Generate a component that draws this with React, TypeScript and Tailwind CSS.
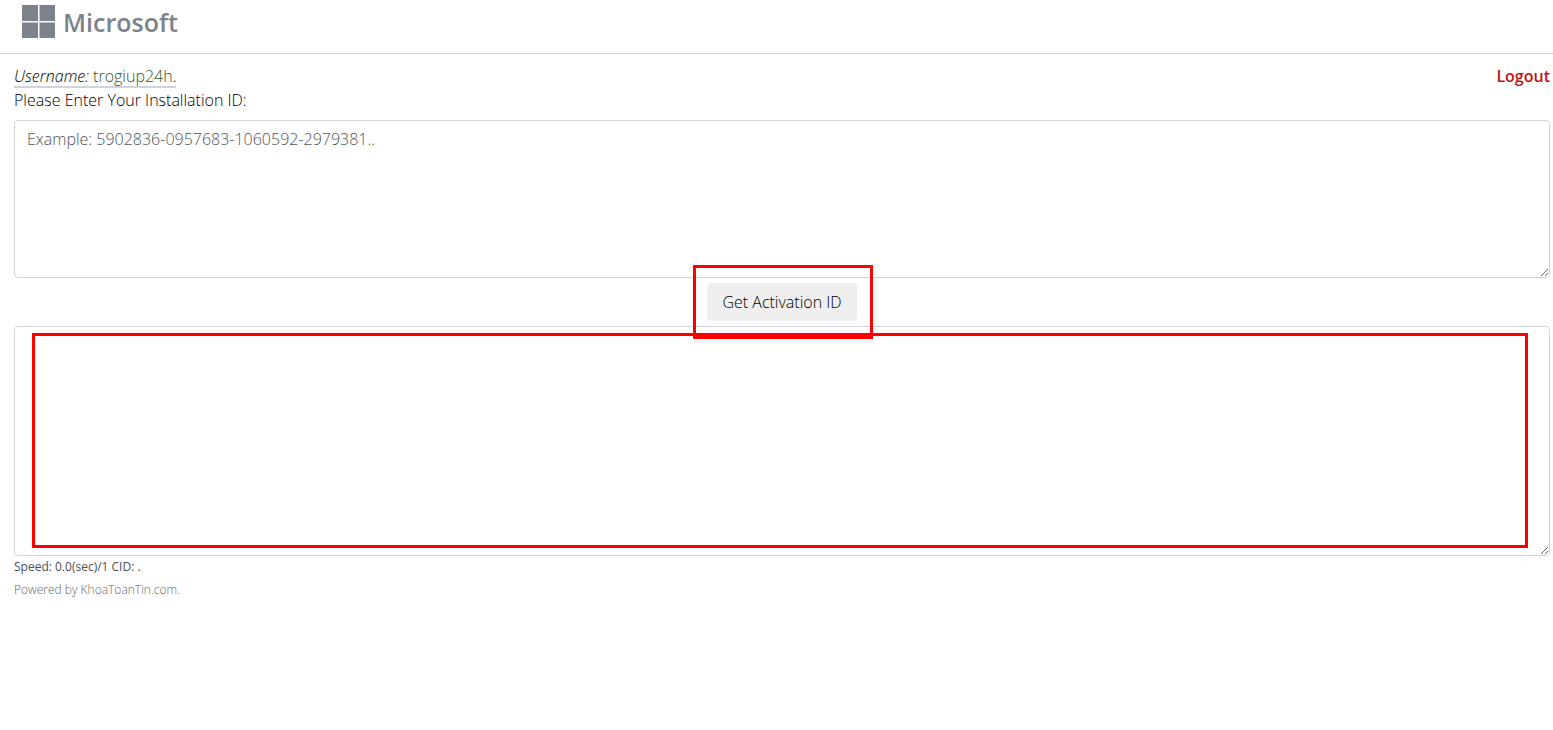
import { useState } from 'react';

const Logo = () => (
  <div className="flex items-center gap-2 text-[#7c838c]">
    <svg width="33" height="33" viewBox="0 0 33 33" fill="currentColor" aria-hidden="true">
      <rect x="0" y="0" width="16" height="16" />
      <rect x="17.5" y="0" width="15.5" height="16" />
      <rect x="0" y="17.5" width="16" height="15.5" />
      <rect x="17.5" y="17.5" width="15.5" height="15.5" />
    </svg>
    <span className="text-[25px] leading-8 font-semibold">Microsoft</span>
  </div>
);

const App = () => {
  const [installationId, setInstallationId] = useState('');
  const [result, setResult] = useState('');

  return (
    <div className="bg-white font-['Open_Sans',sans-serif] text-base leading-6 font-light text-[#212529]">
      {/* Top Bar */}
      <header className="h-[54px] border-b border-[#ced4da] pl-[22px] pt-[5px]">
        <Logo />
      </header>

      <main className="pt-[10px] pr-[3px] pl-[14px]">
        <div className="flex items-start justify-between">
          <div className="h-6 border-b-2 border-[#ced4da] text-black">
            <i>Username:</i> <span className="text-[#1f5a24]">trogiup24h</span>.
          </div>
          <a href="#logout" className="font-semibold text-[#c01414]">
            Logout
          </a>
        </div>

        <form onSubmit={(e) => e.preventDefault()}>
          <label htmlFor="iid" className="mb-2 block text-black">
            Please Enter Your Installation ID:
          </label>
          <textarea
            id="iid"
            rows={6}
            value={installationId}
            onChange={(e) => setInstallationId(e.target.value)}
            placeholder="Example: 5902836-0957683-1060592-2979381.."
            className="block w-full resize rounded border border-[#ced4da] px-3 py-[6px] placeholder:text-[#4c545c]"
          />

          <div className="flex justify-center py-[5px]">
            <div className="relative">
              <button type="submit" className="h-[38px] w-[150px] rounded bg-[#efefef] text-black">
                Get Activation ID
              </button>
              {/* Highlight frame */}
              <div className="pointer-events-none absolute -top-[18px] -right-4 -bottom-[18px] -left-[14px] z-10 border-3 border-[#ff0000]" />
            </div>
          </div>

          <div className="relative">
            <textarea
              aria-label="Activation ID"
              rows={9}
              value={result}
              onChange={(e) => setResult(e.target.value)}
              className="block w-full resize rounded border border-[#ced4da] px-3 py-[6px]"
            />
            {/* Highlight frame */}
            <div className="pointer-events-none absolute top-[7px] right-[22px] bottom-2 left-[18px] border-3 border-[#ff0000]" />
          </div>
        </form>

        <footer className="text-xs">
          <p className="leading-[22px] font-normal text-[#495057]">Speed: 0.0(sec)/1 CID: .</p>
          <p className="leading-6 text-[#666666]">Powered by KhoaToanTin.com.</p>
        </footer>
      </main>
    </div>
  );
};

export default App;
